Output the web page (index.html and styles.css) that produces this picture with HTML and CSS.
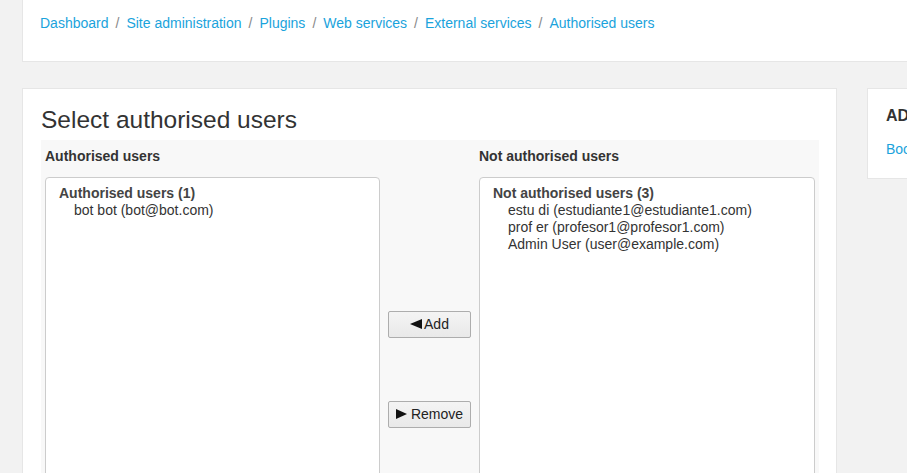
FILE: index.html
```html
<!DOCTYPE html>
<html lang="en">
<head>
<meta charset="utf-8">
<title>Authorised users</title>
<link rel="stylesheet" href="styles.css">
</head>
<body>
<div class="page">
  <header class="page-header">
    <nav class="breadcrumb">
      <a href="#">Dashboard</a>
      <span class="sep">/</span>
      <a href="#">Site administration</a>
      <span class="sep">/</span>
      <a href="#">Plugins</a>
      <span class="sep">/</span>
      <a href="#">Web services</a>
      <span class="sep">/</span>
      <a href="#">External services</a>
      <span class="sep">/</span>
      <a href="#">Authorised users</a>
    </nav>
  </header>

  <div class="layout">
    <main class="main-card">
      <h2 class="title">Select authorised users</h2>
      <div class="selector">
        <div class="col-head">Authorised users</div>
        <div class="col-head mid-head"></div>
        <div class="col-head">Not authorised users</div>

        <div class="listbox">
          <div class="group">Authorised users (1)</div>
          <div class="option">bot bot (bot@bot.com)</div>
        </div>
        <div class="buttons">
          <button class="btn" type="button"><svg class="tri" width="12" height="10" viewBox="0 0 12 10"><polygon points="0,5 12,0 12,10" /></svg>Add</button>
          <button class="btn btn-remove" type="button"><svg class="tri" width="11" height="10" viewBox="0 0 11 10"><polygon points="0,0 11,5 0,10" /></svg>Remove</button>
        </div>
        <div class="listbox">
          <div class="group">Not authorised users (3)</div>
          <div class="option">estu di (estudiante1@estudiante1.com)</div>
          <div class="option">prof er (profesor1@profesor1.com)</div>
          <div class="option">Admin User (user@example.com)</div>
        </div>
      </div>
    </main>

    <aside class="side-card">
      <h3 class="side-title">ADMIN BOOKMARKS</h3>
      <a class="side-link" href="#">Bookmark this page</a>
    </aside>
  </div>
</div>
</body>
</html>
```

FILE: styles.css
```css
html, body {
  margin: 0;
  padding: 0;
  overflow: hidden;
}
body {
  background: #f2f2f2;
  font-family: "Liberation Sans", Arial, sans-serif;
  font-size: 14px;
  color: #333;
  width: 907px;
  height: 473px;
}
a {
  color: #1aa3dc;
  text-decoration: none;
}
.page {
  padding-left: 22px;
}
.page-header {
  background: #fff;
  border: 1px solid #e6e6e6;
  border-top: none;
  border-right: none;
  height: 61px;
  width: 1000px;
  box-sizing: content-box;
}
.breadcrumb {
  display: flex;
  padding: 15px 0 0 17px;
  line-height: 17px;
  white-space: nowrap;
}
.breadcrumb .sep {
  color: #888;
  padding: 0 7px;
}
.layout {
  display: flex;
  align-items: flex-start;
  gap: 30px;
  margin-top: 26px;
  width: 1200px;
}
.main-card {
  width: 777px;
  flex: none;
  background: #fff;
  border: 1px solid #e6e6e6;
  padding: 16px 18px 0 18px;
  height: 400px;
}
.title {
  margin: 0 0 5px 0;
  font-size: 24.5px;
  font-weight: normal;
  line-height: 30px;
  color: #333;
}
.selector {
  background: #f8f8f8;
  display: grid;
  grid-template-columns: 335px 99px 336px;
  padding: 0 4px 0 4px;
  width: 770px;
}
.col-head {
  font-weight: bold;
  line-height: 17px;
  padding: 8px 0 12px 0;
}
.listbox {
  background: #fff;
  border: 1px solid #ccc;
  border-radius: 4px;
  height: 320px;
  padding: 7px 13px;
  box-sizing: border-box;
  line-height: 17px;
}
.group {
  font-weight: bold;
  color: #444;
}
.option {
  padding-left: 15px;
  color: #333;
}
.buttons {
  display: flex;
  flex-direction: column;
  align-items: center;
  padding-top: 134px;
  gap: 63px;
}
.btn {
  width: 83px;
  height: 27px;
  box-sizing: border-box;
  display: flex;
  align-items: center;
  justify-content: center;
  gap: 2px;
  font-family: "Liberation Sans", Arial, sans-serif;
  font-size: 14px;
  line-height: 16px;
  padding: 0 6px 1px 6px;
  color: #222;
  background: linear-gradient(#f4f4f4, #e9e9e9);
  border: 1px solid #adadad;
  border-radius: 2px;
}
.btn-remove {
  gap: 4px;
}
.tri {
  fill: #111;
  flex: none;
}
.side-card {
  background: #fff;
  border: 1px solid #e6e6e6;
  width: 260px;
  height: 89px;
  padding: 0 18px;
  box-sizing: content-box;
}
.side-title {
  margin: 17px 0 0 0;
  font-size: 16px;
  font-weight: bold;
  line-height: 20px;
  color: #333;
  white-space: nowrap;
}
.side-link {
  display: block;
  margin-top: 15px;
  line-height: 17px;
  white-space: nowrap;
}
```
